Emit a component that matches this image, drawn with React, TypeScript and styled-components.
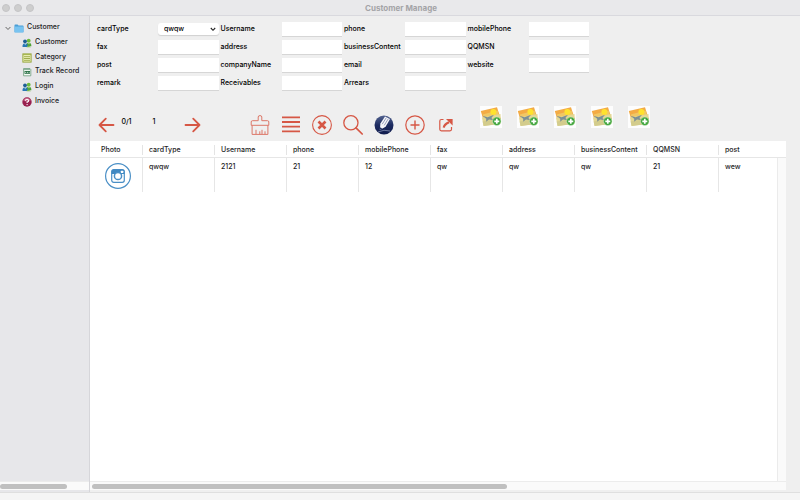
import React from "react";
import styled, { createGlobalStyle } from "styled-components";

const GlobalStyle = createGlobalStyle`
  * { box-sizing: border-box; }
  html, body { margin: 0; padding: 0; }
  body {
    background: #efefef;
    color: #1c1c1e;
    font-family: Inter, "Liberation Sans", sans-serif;
    font-size: 7px;
    font-weight: 500;
    line-height: 10px;
  }
  button, input, select { font: inherit; color: inherit; margin: 0; }
  svg { display: block; }
`;

const Window = styled.div`
  display: flex;
  flex-direction: column;
  height: 100vh;
  overflow: hidden;
`;

const TitleBar = styled.header`
  display: grid;
  grid-template-columns: 80px 1fr 80px;
  align-items: center;
  height: 16px;
  flex: none;
  background: #e9e9eb;
  border-bottom: 1px solid #d9d9de;
`;

const Lights = styled.div`
  display: flex;
  gap: 4px;
  padding-left: 2px;
`;

const Light = styled.button`
  width: 8px;
  height: 8px;
  padding: 0;
  border: 1px solid #c5c5c7;
  border-radius: 50%;
  background: #cecece;
`;

const Title = styled.h1`
  margin: 0;
  padding-left: 2px;
  font-size: 8px;
  line-height: 12px;
  font-weight: 700;
  color: #a4a4a7;
  text-align: center;
`;

const Main = styled.div`
  display: flex;
  flex: 1;
  min-height: 0;
`;

const Sidebar = styled.aside`
  display: flex;
  flex-direction: column;
  width: 90px;
  flex: none;
  background: #e7e7ea;
  border-right: 1px solid #d6d6da;
`;

const Tree = styled.nav`
  display: flex;
  flex-direction: column;
  flex: 1;
  padding-top: 4px;
`;

const TreeList = styled.div`
  display: flex;
  flex-direction: column;
  height: 88px;
`;

const TreeItem = styled.button<{ $level: number }>`
  display: flex;
  flex: 1;
  align-items: center;
  gap: 3px;
  padding: 0 0 0 ${(p) => (p.$level ? 22 : 5)}px;
  border: 0;
  background: none;
  text-align: left;
  white-space: nowrap;
`;

const TreeIcon = styled.span`
  flex: none;
  padding-top: 2px;
`;

const Track = styled.div`
  flex: none;
  height: 9px;
  padding: 2px 2px;
  background: #fafafa;
  border-top: 1px solid #ececec;
  margin-bottom: 2px;
`;

const SideTrack = styled(Track)`
  padding-left: 0;
`;

const Thumb = styled.div<{ $size: number }>`
  width: ${(p) => p.$size}%;
  height: 5px;
  border-radius: 3px;
  background: #c0c0c0;
`;

const Content = styled.main`
  display: flex;
  flex: 1;
  flex-direction: column;
  min-width: 0;
  background: #efefef;
`;

const Form = styled.form`
  display: grid;
  grid-template-columns: repeat(4, 1fr);
  grid-template-rows: repeat(4, 1fr);
  height: 77px;
  max-width: 501px;
  padding: 4px 0 0 7px;
  color: #000;
`;

const Field = styled.label`
  display: grid;
  grid-template-columns: 61px 1fr;
  align-items: center;
  padding-right: 2px;
  line-height: 15px;
`;

const FieldName = styled.span`
  white-space: nowrap;
  padding-bottom: 2px;
`;

const TextBox = styled.input`
  width: 100%;
  height: 15px;
  padding: 0 3px;
  border: 0;
  border-bottom: 1px solid #d6d6d6;
  background: #fff;
  outline: 0;
`;

const SelectBox = styled.span`
  position: relative;
  display: block;
  height: 12px;
`;

const Select = styled.select`
  display: block;
  width: 100%;
  height: 12px;
  padding: 0 12px 0 6px;
  appearance: none;
  border: 0;
  border-radius: 3px;
  background: #fff;
  box-shadow: 0 1px 1px #d0d0d0;
  line-height: 12px;
`;

const SelectArrow = styled.svg`
  position: absolute;
  right: 3px;
  top: 3px;
  pointer-events: none;
`;

const Toolbar = styled.div`
  display: flex;
  align-items: flex-start;
  height: 48px;
  flex: none;
  padding-left: 7px;
  color: #000;
`;

const Pager = styled.div`
  display: grid;
  grid-template-columns: 18px 23px 32px 13px 19px;
  align-items: center;
  padding-top: 24px;
  width: 152px;
`;

const PagerText = styled.span`
  align-self: start;
  text-align: center;
`;

const Tools = styled.div`
  display: flex;
  gap: 9px;
  padding-top: 21px;
  margin-right: 23px;
`;

const Pictures = styled.div`
  display: flex;
  gap: 15px;
  padding-top: 13px;
`;

const IconButton = styled.button`
  display: grid;
  place-items: center;
  padding: 0;
  border: 0;
  background: none;
`;

const Panel = styled.section`
  display: flex;
  flex: 1;
  flex-direction: column;
  min-height: 0;
  margin-right: 14px;
`;

const Scroller = styled.div`
  flex: 1;
  min-height: 0;
  overflow: hidden;
`;

const Table = styled.table`
  width: 100%;
  height: 100%;
  table-layout: fixed;
  border-collapse: separate;
  border-spacing: 0;
  background: #fff;
`;

const HeadCell = styled.th`
  height: 17px;
  padding: 4px 0 2px;
  border-bottom: 1px solid #e6e6e6;
  font-weight: 500;
  text-align: left;
  white-space: nowrap;
`;

const HeadText = styled.span<{ $first?: boolean; $last?: boolean }>`
  display: block;
  padding-left: ${(p) => (p.$first ? 11 : 6)}px;
  border-right: 1px solid ${(p) => (p.$last ? "transparent" : "#e4e4e4")};
`;

const Cell = styled.td<{ $last?: boolean }>`
  height: 34px;
  padding: 4px 0 0 6px;
  vertical-align: top;
  border-right: 1px solid ${(p) => (p.$last ? "#ebebeb" : "#e6e6e6")};
`;

const PhotoCell = styled(Cell)`
  padding: 4px 0 0 14px;
`;

const EmptyCell = styled.td`
  padding: 0;
  border-right: 1px solid #ebebeb;
`;

const GutterCell = styled.td`
  padding: 0;
  background: #fafafa;
`;

const StatusBar = styled.footer`
  flex: none;
  height: 8px;
  background: #f5f5f5;
  border-top: 1px solid #dfdfdf;
`;

const RED = "#d65745";

const Chevron = () => (
  <svg width="6" height="6" viewBox="0 0 6 6" fill="none" stroke="#666" strokeWidth="1">
    <path d="M.6 2 3 4.5 5.4 2" />
  </svg>
);

const FolderIcon = () => (
  <svg width="10" height="9" viewBox="0 0 10 9">
    <path d="M.5 1.2Q.5.5 1.2.5H3.6L4.5 1.4H8.8Q9.5 1.4 9.5 2V8.2H.5Z" fill="#4a9ed6" />
    <path d="M.5 2.6H9.5V7.7Q9.5 8.5 8.8 8.5H1.2Q.5 8.5.5 7.7Z" fill="#79c3f0" />
  </svg>
);

const PeopleIcon = () => (
  <svg width="10" height="10" viewBox="0 0 10 10">
    <circle cx="6.7" cy="2.7" r="1.9" fill="#6cba3c" />
    <path d="M4.2 8.2Q4.2 4.8 6.8 4.8T9.4 8.2Z" fill="#4fa334" />
    <path d="M6.2 5 7 6.6 7.7 5Z" fill="#d7edb8" />
    <circle cx="3" cy="3.3" r="1.9" fill="#1d5f94" />
    <path d="M.5 9Q.3 5.3 3.1 5.3T5.8 9Z" fill="#2878b5" />
    <path d="M2.4 5.4 3.2 7.3 4 5.4Z" fill="#d6ecf8" />
    <path d="M4.5 9.3 6 7.4 9 9.2Z" fill="#79b94c" />
  </svg>
);

const CategoryIcon = () => (
  <svg width="10" height="10" viewBox="0 0 10 10">
    <rect x=".9" y=".9" width="8.2" height="8.2" fill="#edf2bd" stroke="#96a63b" />
    <path d="M1 1.6H9" stroke="#a5b44d" strokeWidth="1" />
    <path d="M2 3.7H8M2 5.5H8M2 7.3H8" stroke="#8b9c32" strokeWidth=".8" />
  </svg>
);

const RecordIcon = () => (
  <svg width="10" height="10" viewBox="0 0 10 10">
    <path d="M1.6 8.8V1.5H8L8.8 2.5V8.8Z" fill="#f5faf6" stroke="#6a9b7b" strokeWidth=".8" />
    <path d="M1.7 2.6H8.2" stroke="#6a9b7b" strokeWidth=".8" />
    <path d="M2.5 4H8V6.8H2.5Z" fill="#2b7047" />
    <path d="M3 5.4H4.2M5 5.4H6M6.7 5.4H7.5" stroke="#e3f3e8" strokeWidth=".8" />
  </svg>
);

const InvoiceIcon = () => (
  <svg width="10" height="10" viewBox="0 0 10 10" fill="none">
    <circle cx="5" cy="5" r="4.7" fill="#99204f" />
    <path d="M1.2 3.6A4 4 0 0 1 8.8 3.6Q5 5.8 1.2 3.6Z" fill="#c25f84" />
    <path d="M3.4 3.7Q3.5 2.3 5 2.3T6.6 3.7Q6.6 4.6 5.1 5.1V6.1" stroke="#fff" strokeWidth="1.1" />
    <circle cx="5.1" cy="7.6" r=".7" fill="#fff" />
  </svg>
);

const ArrowIcon = ({ right }: { right?: boolean }) => (
  <svg width="17" height="16" viewBox="0 0 17 16" fill="none" stroke={RED} strokeWidth="1.8" strokeLinecap="round" strokeLinejoin="round">
    <path d={right ? "M1.5 8H15.5M9.2 1.7 15.5 8 9.2 14.3" : "M15.5 8H1.5M7.8 1.7 1.5 8 7.8 14.3"} />
  </svg>
);

const BrushIcon = () => (
  <svg width="22" height="22" viewBox="0 0 22 22" fill="none" stroke="#dc7768" strokeWidth="1" strokeLinejoin="round">
    <path d="M9.2 6.7V3Q9.2 1.6 11 1.6T12.8 3V6.7H18.6Q19.8 6.7 19.8 8V11.3H2.2V8Q2.2 6.7 3.4 6.7ZM3.1 11.3V20.4H18.9V11.3M7 20.2V15.8M10.8 20.2V17.3M13 20.2V15.8M16 20.2V17.3" />
  </svg>
);

const ListIcon = () => (
  <svg width="22" height="22" viewBox="0 0 22 22" stroke={RED} strokeWidth="1.8">
    <path d="M2 3.4H20M2 8H20M2 12.7H20M2 17.4H20" />
  </svg>
);

const CloseIcon = () => (
  <svg width="22" height="22" viewBox="0 0 22 22" fill="none" stroke={RED}>
    <circle cx="11" cy="11" r="9.4" strokeWidth="1.1" />
    <path d="M7.5 7.5 14.5 14.5M14.5 7.5 7.5 14.5" strokeWidth="2.6" />
  </svg>
);

const SearchIcon = () => (
  <svg width="22" height="22" viewBox="0 0 22 22" fill="none" stroke={RED} strokeWidth="1.3" strokeLinecap="round">
    <circle cx="8.9" cy="8.7" r="7.1" />
    <path d="M14 13.8 20.2 20" strokeWidth="1.7" />
  </svg>
);

const PencilIcon = () => (
  <svg width="22" height="22" viewBox="0 0 22 22">
    <defs>
      <linearGradient id="ball" x1="0" y1="0" x2="0" y2="1">
        <stop offset="0" stopColor="#53638f" />
        <stop offset=".5" stopColor="#1c2b60" />
        <stop offset="1" stopColor="#111c4d" />
      </linearGradient>
    </defs>
    <circle cx="11" cy="11" r="9.5" fill="url(#ball)" />
    <path d="M6.8 16 7.4 9.6 12 2.4 17 5 12.6 12.8Z" fill="#f5f6fb" />
    <path d="M9.2 10.2 13.4 3.6M11.2 11.4 15.4 4.6" stroke="#7e88aa" strokeWidth=".8" />
    <path d="M6.8 16 7.1 13.2 9.2 14.4Z" fill="#1c2b60" />
    <path d="M5 18Q11 15 17 17" stroke="#8792b5" strokeWidth=".8" fill="none" />
  </svg>
);

const PlusIcon = () => (
  <svg width="22" height="22" viewBox="0 0 22 22" fill="none" stroke={RED}>
    <circle cx="11" cy="11" r="9.2" strokeWidth="1.2" />
    <path d="M6.5 11H15.5M11 6.5V15.5" strokeWidth="1.4" />
  </svg>
);

const ShareIcon = () => (
  <svg width="22" height="22" viewBox="0 0 22 22" fill="none" stroke={RED} strokeWidth="1.2">
    <path d="M8.5 5.5H6.3Q4.8 5.5 4.8 7V15.3Q4.8 16.8 6.3 16.8H15Q16.5 16.8 16.5 15.3V13" />
    <path d="M8.8 13.6Q9 10.5 14 8.2" strokeWidth="2.2" />
    <path d="M11 5H17.6V11.6Z" fill={RED} stroke="none" />
  </svg>
);

const PictureIcon = () => (
  <svg width="22" height="22" viewBox="0 0 22 22">
    <rect width="22" height="22" fill="#fdfdfd" />
    <path d="M.8 5 17 1.2 20.8 13 4.5 17.5Z" fill="#f3ab45" />
    <path d="M2.8 8.5 17.6 4.6 19.8 13 5.3 16.5Z" fill="#f0c765" />
    <path d="M2 11.5 20.5 8 20.7 17.5 3.5 20Z" fill="#e3d793" />
    <path d="M2.6 15.5 20 12.4V18L3.7 20Z" fill="#d3cc8c" />
    <circle cx="13.4" cy="6" r="3" fill="#ffe22e" />
    <path d="M2.4 9.8 7.6 11.2 14 8.8 11.4 12 13.6 14.2 9 13.4 6.2 15.8 6.2 12.8Z" fill="#7c9095" />
    <circle cx="16.8" cy="15.3" r="4.2" fill="#3fa43b" stroke="#d5edcf" strokeWidth=".5" />
    <path d="M14.3 15.3H19.3M16.8 12.8V17.8" stroke="#fff" strokeWidth="1.7" />
  </svg>
);

const CameraIcon = () => (
  <svg width="28" height="28" viewBox="0 0 28 28" fill="none">
    <circle cx="14" cy="14" r="12.4" stroke="#4a8fc6" strokeWidth="1.2" />
    <rect x="7.7" y="7.7" width="12.6" height="12.6" rx="2" stroke="#4a8fc6" strokeWidth="1.2" />
    <path d="M7.5 12V9.5Q7.5 7.5 9.5 7.5H18.5Q20.5 7.5 20.5 9.5V12Z" fill="#3f88c2" />
    <rect x="16.8" y="8.7" width="2.5" height="2.4" rx=".5" fill="#fff" />
    <circle cx="14" cy="14" r="3.6" fill="#fff" stroke="#4a8fc6" strokeWidth="1.5" />
  </svg>
);

const tree = [
  { name: "Customer", icon: <PeopleIcon /> },
  { name: "Category", icon: <CategoryIcon /> },
  { name: "Track Record", icon: <RecordIcon /> },
  { name: "Login", icon: <PeopleIcon /> },
  { name: "Invoice", icon: <InvoiceIcon /> },
];

const fields = [
  "Username", "phone", "mobilePhone",
  "fax", "address", "businessContent", "QQMSN",
  "post", "companyName", "email", "website",
  "remark", "Receivables", "Arrears",
];

const tools = [
  { name: "Clear", icon: <BrushIcon /> },
  { name: "List", icon: <ListIcon /> },
  { name: "Delete", icon: <CloseIcon /> },
  { name: "Search", icon: <SearchIcon /> },
  { name: "Edit", icon: <PencilIcon /> },
  { name: "Add", icon: <PlusIcon /> },
  { name: "Export", icon: <ShareIcon /> },
];

const columns: { name: string; width?: number; value: string }[] = [
  { name: "cardType", width: 72, value: "qwqw" },
  { name: "Username", width: 72, value: "2121" },
  { name: "phone", width: 72, value: "21" },
  { name: "mobilePhone", width: 72, value: "12" },
  { name: "fax", width: 72, value: "qw" },
  { name: "address", width: 72, value: "qw" },
  { name: "businessContent", width: 72, value: "qw" },
  { name: "QQMSN", width: 72, value: "21" },
  { name: "post", value: "wew" },
];

export default function App() {
  const last = columns.length - 1;
  return (
    <Window>
      <GlobalStyle />
      <TitleBar>
        <Lights>
          <Light aria-label="Close" />
          <Light aria-label="Minimize" />
          <Light aria-label="Zoom" />
        </Lights>
        <Title>Customer Manage</Title>
      </TitleBar>
      <Main>
        <Sidebar>
          <Tree>
            <TreeList>
              <TreeItem $level={0}>
                <TreeIcon><Chevron /></TreeIcon>
                <TreeIcon><FolderIcon /></TreeIcon>
                Customer
              </TreeItem>
              {tree.map((item) => (
                <TreeItem $level={1} key={item.name}>
                  <TreeIcon>{item.icon}</TreeIcon>
                  {item.name}
                </TreeItem>
              ))}
            </TreeList>
          </Tree>
          <SideTrack><Thumb $size={77} /></SideTrack>
        </Sidebar>
        <Content>
          <Form>
            <Field>
              <FieldName>cardType</FieldName>
              <SelectBox>
                <Select defaultValue="qwqw">
                  <option>qwqw</option>
                </Select>
                <SelectArrow width="6" height="6" viewBox="0 0 6 6" fill="none" stroke="#222" strokeWidth="1.1">
                  <path d="M.8 2 3 4.3 5.2 2" />
                </SelectArrow>
              </SelectBox>
            </Field>
            {fields.map((name) => (
              <Field key={name}>
                <FieldName>{name}</FieldName>
                <TextBox type="text" />
              </Field>
            ))}
          </Form>
          <Toolbar>
            <Pager>
              <IconButton aria-label="Previous page"><ArrowIcon /></IconButton>
              <PagerText>0/1</PagerText>
              <PagerText>1</PagerText>
              <span />
              <IconButton aria-label="Next page"><ArrowIcon right /></IconButton>
            </Pager>
            <Tools>
              {tools.map((tool) => (
                <IconButton key={tool.name} aria-label={tool.name}>{tool.icon}</IconButton>
              ))}
            </Tools>
            <Pictures>
              {[1, 2, 3, 4, 5].map((n) => (
                <IconButton key={n} aria-label={`Add picture ${n}`}><PictureIcon /></IconButton>
              ))}
            </Pictures>
          </Toolbar>
          <Panel>
            <Scroller>
              <Table>
                <colgroup>
                  <col width={53} />
                  {columns.map((c) => <col key={c.name} width={c.width} />)}
                  <col width={8} />
                </colgroup>
                <thead>
                  <tr>
                    <HeadCell><HeadText $first>Photo</HeadText></HeadCell>
                    {columns.map((c, i) => (
                      <HeadCell key={c.name}><HeadText $last={i === last}>{c.name}</HeadText></HeadCell>
                    ))}
                    <HeadCell aria-hidden="true" />
                  </tr>
                </thead>
                <tbody>
                  <tr>
                    <PhotoCell><CameraIcon /></PhotoCell>
                    {columns.map((c, i) => (
                      <Cell key={c.name} $last={i === last}>{c.value}</Cell>
                    ))}
                    <GutterCell rowSpan={2} />
                  </tr>
                  <tr>
                    <EmptyCell colSpan={columns.length + 1} />
                  </tr>
                </tbody>
              </Table>
            </Scroller>
            <Track><Thumb $size={60} /></Track>
          </Panel>
        </Content>
      </Main>
      <StatusBar />
    </Window>
  );
}
